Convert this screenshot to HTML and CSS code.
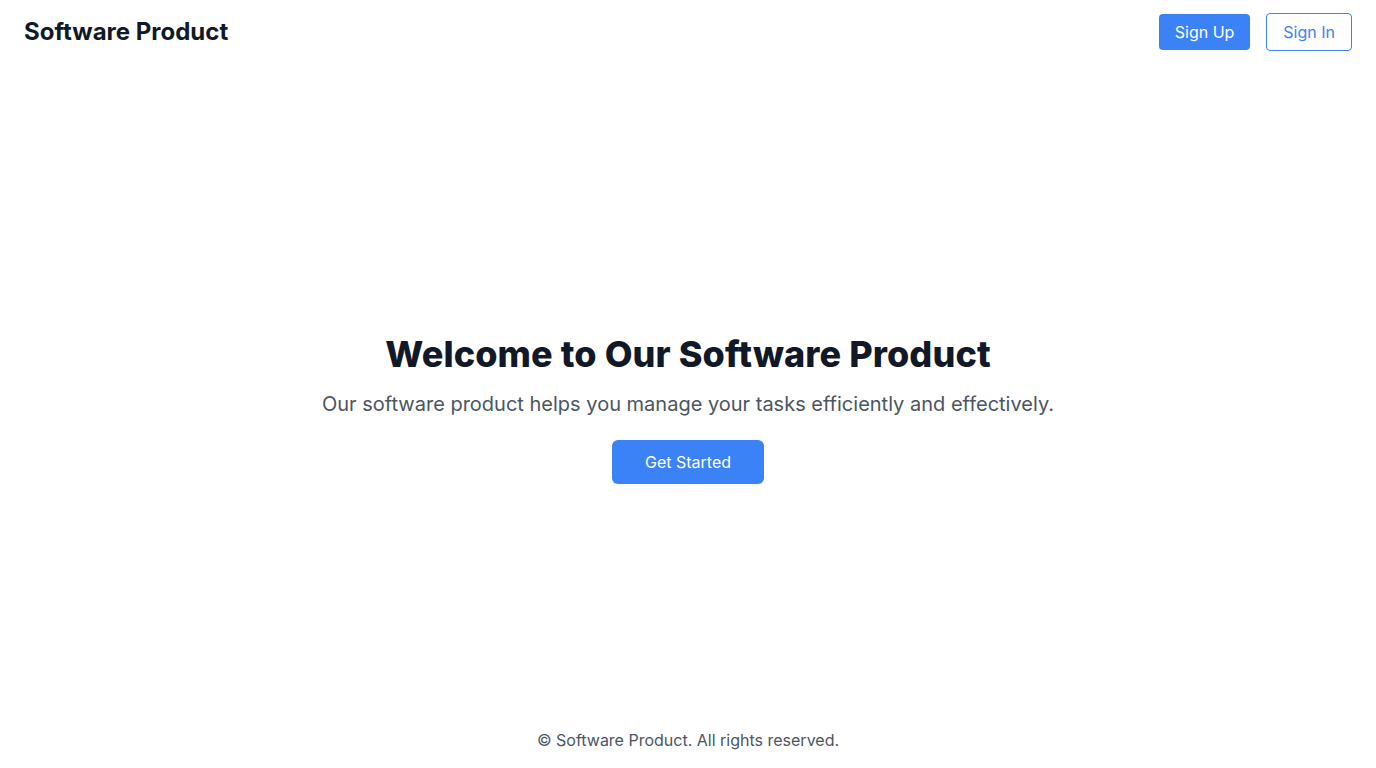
FILE: index.html
```html
<!DOCTYPE html>
<html lang="en">
<head>
<meta charset="utf-8">
<title>Software Product</title>
<link rel="stylesheet" href="styles.css">
</head>
<body>
<div class="page">
  <header class="header">
    <div class="brand">Software Product</div>
    <nav class="actions">
      <button class="btn btn-primary">Sign Up</button>
      <button class="btn btn-outline">Sign In</button>
    </nav>
  </header>
  <main class="hero">
    <h1 class="hero-title">Welcome to Our Software Product</h1>
    <p class="hero-text">Our software product helps you manage your tasks efficiently and effectively.</p>
    <button class="btn btn-primary btn-large">Get Started</button>
  </main>
  <footer class="footer">© Software Product. All rights reserved.</footer>
</div>
</body>
</html>
```
FILE: styles.css
```css
* { box-sizing: border-box; }
html, body { margin: 0; padding: 0; }
body {
  font-family: Inter, "Noto Sans", sans-serif;
  background: #ffffff;
  color: #111827;
}
.page {
  display: flex;
  flex-direction: column;
  min-height: 100vh;
}
.header {
  height: 64px;
  padding: 0 24px;
  display: flex;
  align-items: center;
  justify-content: space-between;
}
.brand {
  font-size: 24px;
  font-weight: 700;
  line-height: 32px;
  color: #111827;
}
.actions {
  display: flex;
  gap: 16px;
  align-items: center;
}
.btn {
  font-family: inherit;
  font-size: 16px;
  line-height: 24px;
  border-radius: 4px;
  cursor: pointer;
  padding: 6px 16px;
  border: 0;
}
.btn-primary {
  background: #3b82f6;
  color: #ffffff;
}
.btn-outline {
  background: #ffffff;
  color: #3b82f6;
  border: 1px solid #3b82f6;
}
.hero {
  flex: 1;
  display: flex;
  flex-direction: column;
  align-items: center;
  justify-content: center;
  text-align: center;
  padding-top: 42px;
}
.hero-title {
  margin: 0 0 16px;
  font-size: 36px;
  line-height: 40px;
  font-weight: 800;
  letter-spacing: 0.1px;
  color: #111827;
}
.hero-text {
  margin: 0 0 22px;
  font-size: 20px;
  line-height: 28px;
  color: #4b5563;
}
.btn-large {
  padding: 10px 33px;
  border-radius: 6px;
}
.footer {
  height: 56px;
  padding: 16px;
  text-align: center;
  font-size: 16px;
  line-height: 24px;
  color: #4b5563;
}
```
